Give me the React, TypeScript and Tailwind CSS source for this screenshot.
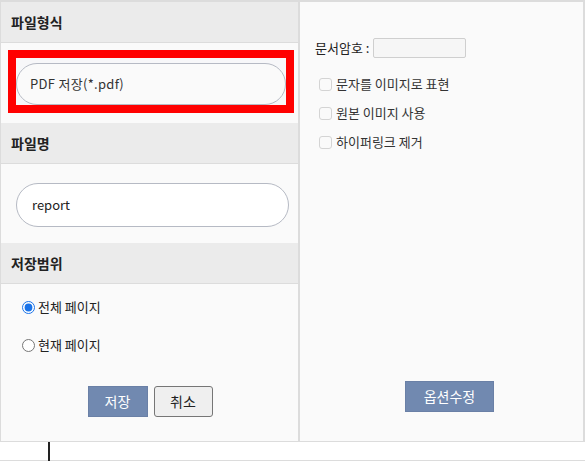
import React from "react";

const font = { fontFamily: '"Noto Sans CJK KR", "Noto Sans", sans-serif' };

function Header({ children }: { children: React.ReactNode }) {
  return (
    <div className="h-[41px] bg-[#ebebeb] border-b border-[#dcdcdc] flex items-center pl-[10px] text-[14px] font-bold text-[#222]">
      {children}
    </div>
  );
}

function Check({ label }: { label: string }) {
  return (
    <div className="flex items-center h-[14px] text-[13px] text-[#333]">
      <span className="w-[13px] h-[13px] border border-[#d4d4d4] rounded-[3px] bg-[#fafafa] ml-[19px] mr-[4px]" />
      <span>{label}</span>
    </div>
  );
}

export default function App() {
  return (
    <div className="w-[585px] h-[461px] bg-white flex flex-col" style={font}>
      <div className="flex h-[441px] border-t-2 border-[#dcdcdc]">
        {/* Left panel */}
        <div className="w-[298px] border-l border-[#dcdcdc] bg-[#fafafa] flex flex-col">
          <Header>파일형식</Header>
          <div className="h-[80px] pl-[7px] pr-[4px] pt-[7px]">
            <div className="h-[63px] border-[8px] border-[#ff0000] bg-[#f7f7f9] pt-[5px]">
              <div className="h-[42px] rounded-full border border-[#b6bac4] bg-[#fafafa] flex items-center pl-[13px] text-[13px] tracking-[0.3px] text-[#333]">
                PDF 저장(*.pdf)
              </div>
            </div>
          </div>
          <Header>파일명</Header>
          <div className="h-[79px] pl-[15px] pr-[9px] pt-[19px]">
            <div className="h-[44px] rounded-full border border-[#b6bac4] bg-white flex items-center pl-[15px] text-[13px] text-[#222]">
              report
            </div>
          </div>
          <Header>저장범위</Header>
          <div className="flex-1 flex flex-col">
            <label className="flex items-center h-[14px] mt-[16px] text-[13px] text-[#222]">
              <input type="radio" name="range" defaultChecked className="w-[13px] h-[13px] m-0 ml-[21px] mr-[3px] accent-[#1a73e8]" />
              전체 페이지
            </label>
            <label className="flex items-center h-[14px] mt-[24px] text-[13px] text-[#222]">
              <input type="radio" name="range" className="w-[13px] h-[13px] m-0 ml-[21px] mr-[3px]" />
              현재 페이지
            </label>
            <div className="flex justify-center gap-[6px] mt-[34px] pl-[1px]">
              <button className="w-[60px] h-[31px] bg-[#7189b0] border border-[#6a80a6] text-white text-[14px]">저장</button>
              <button className="w-[59px] h-[31px] bg-[#efefef] border border-[#767676] rounded-[3px] text-[#222] text-[14px]">취소</button>
            </div>
          </div>
        </div>
        {/* divider */}
        <div className="w-[2px] bg-[#dcdcdc]" />
        {/* Right panel */}
        <div className="w-[283px] bg-[#fafafa] flex flex-col">
          <div className="flex items-center mt-[36px] h-[20px] pl-[15px] text-[13px] text-[#222]">
            <span>문서암호 :</span>
            <span className="ml-[4px] w-[93px] h-[20px] border border-[#cfcfcf] rounded-[2px] bg-[#f6f6f6]" />
          </div>
          <div className="flex flex-col gap-[15px] mt-[19px]">
            <Check label="문자를 이미지로 표현" />
            <Check label="원본 이미지 사용" />
            <Check label="하이퍼링크 제거" />
          </div>
          <div className="flex justify-start pl-[105px] mt-[232px]">
            <button className="w-[89px] h-[31px] bg-[#7189b0] border border-[#6a80a6] text-white text-[14px]">옵션수정</button>
          </div>
        </div>
        <div className="w-[2px] bg-[#dcdcdc]" />
      </div>
      <div className="h-[20px] border-t border-b border-[#dcdcdc] bg-white relative">
        <div className="absolute left-[48px] top-0 w-[1.5px] h-[19px] bg-[#222]" />
      </div>
    </div>
  );
}
